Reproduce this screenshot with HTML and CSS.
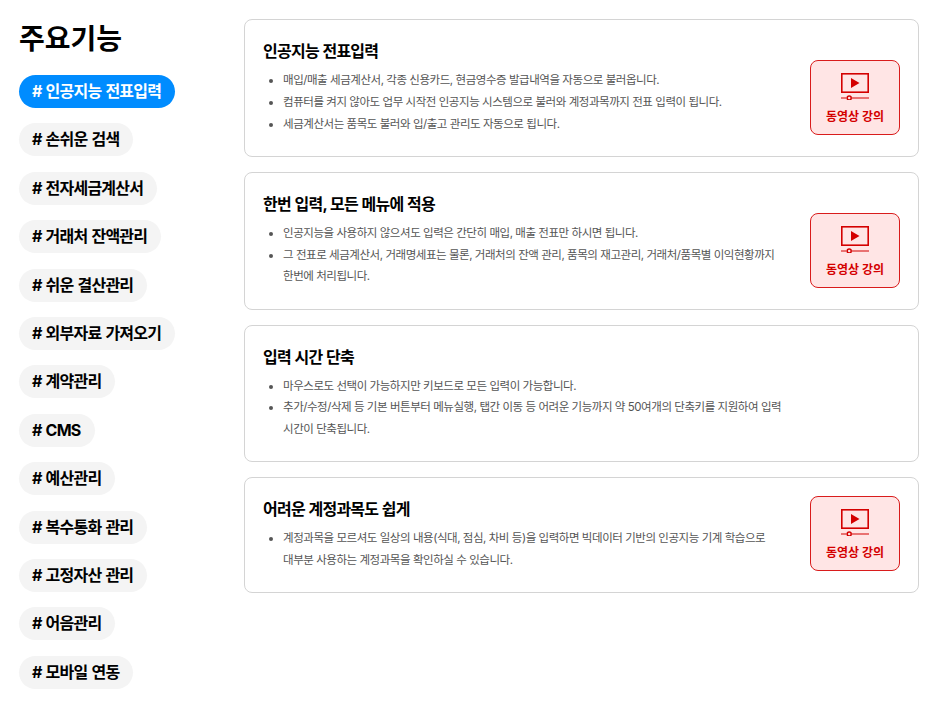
FILE: index.html
```html
<!DOCTYPE html>
<html lang="ko">
<head>
    <meta charset="UTF-8">
    <meta name="viewport" content="width=device-width, initial-scale=1.0">
    <title>주요기능</title>
    <link rel="stylesheet" href="styles.css">
</head>
<body>
    <svg class="icon-defs" width="0" height="0">
        <symbol id="video-icon" viewBox="0 0 28 27">
            <rect x="0.8" y="0.8" width="26.4" height="18.4" fill="none" stroke="currentColor" stroke-width="1.6"/>
            <path d="M10 5 L18.5 10 L10 15 Z" fill="currentColor"/>
            <path d="M0 25 H5.5 M11 25 H28" stroke="currentColor" stroke-width="1.2"/>
            <circle cx="8.2" cy="25" r="2" fill="none" stroke="currentColor" stroke-width="1.5"/>
        </symbol>
    </svg>

    <div class="page">
        <aside class="sidebar">
            <h1 class="title">주요기능</h1>
            <ul class="tag-list">
                <li class="tag active"># 인공지능 전표입력</li>
                <li class="tag"># 손쉬운 검색</li>
                <li class="tag"># 전자세금계산서</li>
                <li class="tag"># 거래처 잔액관리</li>
                <li class="tag"># 쉬운 결산관리</li>
                <li class="tag"># 외부자료 가져오기</li>
                <li class="tag"># 계약관리</li>
                <li class="tag"># CMS</li>
                <li class="tag"># 예산관리</li>
                <li class="tag"># 복수통화 관리</li>
                <li class="tag"># 고정자산 관리</li>
                <li class="tag"># 어음관리</li>
                <li class="tag"># 모바일 연동</li>
            </ul>
        </aside>

        <main class="content">
            <section class="card">
                <div class="card-body">
                    <h2 class="card-title">인공지능 전표입력</h2>
                    <ul class="points">
                        <li>매입/매출 세금계산서, 각종 신용카드, 현금영수증 발급내역을 자동으로 불러옵니다.</li>
                        <li>컴퓨터를 켜지 않아도 업무 시작전 인공지능 시스템으로 불러와 계정과목까지 전표 입력이 됩니다.</li>
                        <li>세금계산서는 품목도 불러와 입/출고 관리도 자동으로 됩니다.</li>
                    </ul>
                </div>
                <a class="video-btn">
                    <svg class="video-icon"><use href="#video-icon"/></svg>
                    <span>동영상 강의</span>
                </a>
            </section>

            <section class="card">
                <div class="card-body">
                    <h2 class="card-title">한번 입력, 모든 메뉴에 적용</h2>
                    <ul class="points">
                        <li>인공지능을 사용하지 않으셔도 입력은 간단히 매입, 매출 전표만 하시면 됩니다.</li>
                        <li>그 전표로 세금계산서, 거래명세표는 물론, 거래처의 잔액 관리, 품목의 재고관리, 거래처/품목별 이익현황까지 한번에 처리됩니다.</li>
                    </ul>
                </div>
                <a class="video-btn">
                    <svg class="video-icon"><use href="#video-icon"/></svg>
                    <span>동영상 강의</span>
                </a>
            </section>

            <section class="card">
                <div class="card-body">
                    <h2 class="card-title">입력 시간 단축</h2>
                    <ul class="points">
                        <li>마우스로도 선택이 가능하지만 키보드로 모든 입력이 가능합니다.</li>
                        <li>추가/수정/삭제 등 기본 버튼부터 메뉴실행, 탭간 이동 등 어려운 기능까지 약 50여개의 단축키를 지원하여 입력 시간이 단축됩니다.</li>
                    </ul>
                </div>
            </section>

            <section class="card">
                <div class="card-body">
                    <h2 class="card-title">어려운 계정과목도 쉽게</h2>
                    <ul class="points">
                        <li>계정과목을 모르셔도 일상의 내용(식대, 점심, 차비 등)을 입력하면 빅데이터 기반의 인공지능 기계 학습으로 대부분 사용하는 계정과목을 확인하실 수 있습니다.</li>
                    </ul>
                </div>
                <a class="video-btn">
                    <svg class="video-icon"><use href="#video-icon"/></svg>
                    <span>동영상 강의</span>
                </a>
            </section>
        </main>
    </div>
</body>
</html>
```

FILE: styles.css
```css
* {
    margin: 0;
    padding: 0;
    box-sizing: border-box;
}
body {
    font-family: Inter, "Noto Sans CJK KR", "Noto Sans", sans-serif;
    background-color: #ffffff;
    color: #000000;
    word-break: keep-all;
}
.icon-defs {
    position: absolute;
}
.page {
    display: flex;
    align-items: flex-start;
    padding: 19px 27px 0 19px;
}

/* left tag column */
.sidebar {
    width: 225px;
    flex-shrink: 0;
}
.title {
    font-size: 28px;
    font-weight: 700;
    line-height: 40px;
    margin-bottom: 16px;
}
.tag-list {
    list-style: none;
    display: flex;
    flex-direction: column;
    align-items: flex-start;
    gap: 15.42px;
}
.tag {
    height: 33px;
    line-height: 32px;
    padding: 0 14px 0 13px;
    border-radius: 17px;
    background-color: #f4f4f4;
    font-size: 16px;
    font-weight: 700;
    letter-spacing: -0.78px;
    word-spacing: 1px;
}
.tag.active {
    background-color: #008cff;
    color: #ffffff;
}

/* right cards */
.content {
    flex: 1;
    display: flex;
    flex-direction: column;
    gap: 15px;
}
.card {
    display: flex;
    align-items: flex-end;
    border: 1px solid #d4d4d4;
    border-radius: 8px;
    padding: 17px 18px 21px 18px;
}
.card-body {
    flex: 1;
    min-width: 0;
}
.card-title {
    font-size: 16px;
    font-weight: 700;
    line-height: 28px;
    letter-spacing: -0.75px;
    word-spacing: 0.5px;
    margin-bottom: 5px;
}
.points {
    padding-left: 20px;
    max-width: 530px;
    margin-bottom: -0.5px;
    color: #555555;
    font-size: 11.5px;
    line-height: 21.75px;
    letter-spacing: -0.45px;
}
.video-btn {
    width: 90px;
    height: 75px;
    flex-shrink: 0;
    display: flex;
    flex-direction: column;
    align-items: center;
    gap: 8px;
    padding-top: 12px;
    background-color: #ffe5e5;
    border: 1px solid #d91c1c;
    border-radius: 8px;
    color: #d40000;
    font-size: 12px;
    line-height: 18px;
    font-weight: 700;
}
.video-icon {
    width: 28px;
    height: 27px;
    flex-shrink: 0;
}
```
